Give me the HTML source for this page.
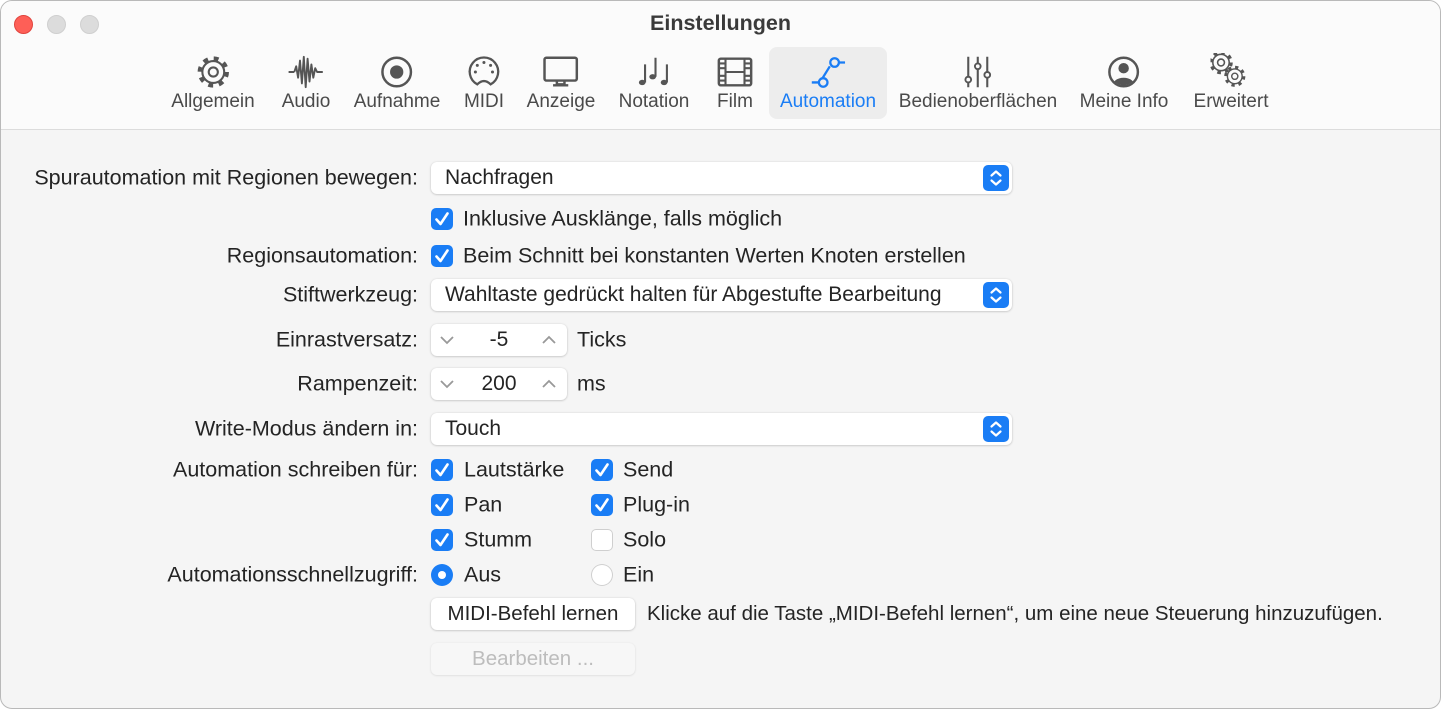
<!DOCTYPE html>
<html><head><meta charset="utf-8">
<style>
*{margin:0;padding:0;box-sizing:border-box}
body{width:1442px;height:710px;background:#fff;font-family:"Liberation Sans",sans-serif;color:#242424;position:relative;overflow:hidden}
.win{position:absolute;left:0;top:0;width:1441px;height:709px;border:1.5px solid #b9b9b9;border-radius:12px;background:#f5f5f5;overflow:hidden}
.tb{position:absolute;left:0;top:0;width:100%;height:129px;background:#fbfbfb;border-bottom:1px solid #dcdcdc}
.dot{position:absolute;top:14px;width:19px;height:19px;border-radius:50%}
.title{position:absolute;left:0;width:100%;top:10px;text-align:center;font-weight:bold;font-size:21.5px;color:#3a3a3a}
.it{position:absolute;top:52px;text-align:center;transform:translateX(-50%);font-size:19px;color:#4a4a4a;white-space:nowrap}
.it svg{display:block;margin:0 auto 0;width:40px;height:38px}
.it span{display:block}
.sel{position:absolute;left:768px;top:46px;width:118px;height:72px;background:#ededed;border-radius:8px}
.lbl{position:absolute;right:1022px;font-size:21.5px;white-space:nowrap;transform:translateY(-50%)}
.t{position:absolute;font-size:21.5px;white-space:nowrap;transform:translateY(-50%)}
.pop{position:absolute;left:430px;width:581px;height:32px;background:#fff;border-radius:6px;box-shadow:0 0.5px 2px rgba(0,0,0,.25);font-size:21px;padding-left:14px;line-height:32px}
.pop .b{position:absolute;right:3px;top:3px;width:26px;height:26px;border-radius:5px;background:#1a7df5}
.cb{position:absolute;width:22px;height:22px;border-radius:5px;background:#1a7df5;transform:translateY(-50%)}
.cb.off{background:#fff;box-shadow:inset 0 0 0 1px #cfcfcf}
.rb{position:absolute;width:22px;height:22px;border-radius:50%;background:#1a7df5;transform:translateY(-50%)}
.rb::after{content:"";position:absolute;left:7px;top:7px;width:8px;height:8px;border-radius:50%;background:#fff}
.rb.off{background:#fff;box-shadow:inset 0 0 0 1px #cfcfcf}
.rb.off::after{display:none}
.step{position:absolute;left:430px;width:136px;height:32px;background:#fff;border-radius:6px;box-shadow:0 0.5px 2px rgba(0,0,0,.25);font-size:21px;text-align:center;line-height:32px}
.btn{position:absolute;left:430px;width:204px;height:32px;background:#fff;border-radius:6px;box-shadow:0 0.5px 2px rgba(0,0,0,.25);font-size:20.5px;text-align:center;line-height:32px}
</style></head><body>
<svg width="0" height="0" style="position:absolute"><defs>
<symbol id="gear" viewBox="0 0 40 40"><circle cx="20" cy="20" r="14" fill="none" stroke="#555" stroke-width="5" stroke-dasharray="5 6"/><circle cx="20" cy="20" r="11.5" fill="#fbfbfb" stroke="#555" stroke-width="2.2"/><circle cx="20" cy="20" r="4.8" fill="none" stroke="#555" stroke-width="2.2"/></symbol>
</defs></svg>
<div class="win">
<div class="tb">
<div class="dot" style="left:13px;background:#fe5f57;border:1px solid #e0443e"></div>
<div class="dot" style="left:46px;background:#dcdcdc;border:1px solid #cfcfcf"></div>
<div class="dot" style="left:79px;background:#dcdcdc;border:1px solid #cfcfcf"></div>
<div class="title">Einstellungen</div>
<div class="sel"></div>
<div class="it" style="left:212px"><svg viewBox="0 0 40 40"><use href="#gear"/></svg><span>Allgemein</span></div>
<div class="it" style="left:305px"><svg viewBox="0 0 40 40"><path d="M2 20H8M8 20L10 14L12 26L14 8L16 32L18 4L20 36L22 6L24 30L26 12L28 26L30 16L32 20H38" fill="none" stroke="#555" stroke-width="2" stroke-linejoin="round"/></svg><span>Audio</span></div>
<div class="it" style="left:396px"><svg viewBox="0 0 40 40"><circle cx="20" cy="20" r="15" fill="none" stroke="#555" stroke-width="2.6"/><circle cx="20" cy="20" r="7" fill="#555"/></svg><span>Aufnahme</span></div>
<div class="it" style="left:483px"><svg viewBox="0 0 40 40"><path d="M13 33A15 15 0 1 1 27 33Q20 26 13 33Z" fill="none" stroke="#555" stroke-width="2.4"/><circle cx="20" cy="10" r="1.6" fill="#555"/><circle cx="13" cy="13" r="1.6" fill="#555"/><circle cx="27" cy="13" r="1.6" fill="#555"/><circle cx="11" cy="20" r="1.6" fill="#555"/><circle cx="29" cy="20" r="1.6" fill="#555"/></svg><span>MIDI</span></div>
<div class="it" style="left:560px"><svg viewBox="0 0 40 40"><rect x="3" y="5" width="34" height="24" rx="2" fill="none" stroke="#555" stroke-width="2.6"/><path d="M16 29V33H24V29M12 34H28" stroke="#555" stroke-width="2.6" fill="none"/></svg><span>Anzeige</span></div>
<div class="it" style="left:653px"><svg viewBox="0 0 40 40"><g fill="#555"><ellipse cx="8" cy="31" rx="3.5" ry="2.8"/><ellipse cx="19" cy="25" rx="3.5" ry="2.8"/><ellipse cx="31" cy="31" rx="3.5" ry="2.8"/></g><path d="M11 31V12M22 25V5M34 31V12" stroke="#555" stroke-width="2.2"/></svg><span>Notation</span></div>
<div class="it" style="left:734px"><svg viewBox="0 0 40 40"><rect x="3" y="6" width="34" height="28" rx="2" fill="none" stroke="#555" stroke-width="2.6"/><path d="M10 6V34M30 6V34M10 20H30M3 11H10M3 16H10M3 24H10M3 29H10M30 11H37M30 16H37M30 24H37M30 29H37" stroke="#555" stroke-width="2.2"/></svg><span>Film</span></div>
<div class="it" style="left:827px;color:#1a7df5"><svg viewBox="0 0 40 40"><path d="M3 31H11M32 10H38M14 27L22 14" stroke="#1a7df5" stroke-width="2.4" fill="none"/><circle cx="15" cy="31" r="4.5" fill="none" stroke="#1a7df5" stroke-width="2.4"/><circle cx="27" cy="10" r="4.5" fill="none" stroke="#1a7df5" stroke-width="2.4"/></svg><span>Automation</span></div>
<div class="it" style="left:977px"><svg viewBox="0 0 40 40"><path d="M10 4V36M20 4V36M30 4V36" stroke="#555" stroke-width="2.2"/><circle cx="10" cy="28" r="3" fill="#fbfbfb" stroke="#555" stroke-width="2"/><circle cx="20" cy="14" r="3" fill="#fbfbfb" stroke="#555" stroke-width="2"/><circle cx="30" cy="23" r="3" fill="#fbfbfb" stroke="#555" stroke-width="2"/></svg><span>Bedienoberflächen</span></div>
<div class="it" style="left:1123px"><svg viewBox="0 0 40 40"><defs><clipPath id="c"><circle cx="20" cy="20" r="14"/></clipPath></defs><circle cx="20" cy="20" r="15" fill="none" stroke="#555" stroke-width="2.6"/><g clip-path="url(#c)" fill="#555"><circle cx="20" cy="16" r="5.5"/><ellipse cx="20" cy="35" rx="12" ry="9"/></g></svg><span>Meine Info</span></div>
<div class="it" style="left:1230px"><svg viewBox="0 0 40 40"><use href="#gear" x="-5" y="-5" width="30" height="30"/><use href="#gear" x="11" y="11" width="27" height="27"/></svg><span>Erweitert</span></div>
</div>

<div class="lbl" style="top:177px">Spurautomation mit Regionen bewegen:</div>
<div class="pop" style="top:161px">Nachfragen<div class="b"><svg width="26" height="26" viewBox="0 0 26 26"><path d="M8.5 10.5L13 6.5L17.5 10.5M8.5 15.5L13 19.5L17.5 15.5" fill="none" stroke="#fff" stroke-width="2.2" stroke-linecap="round" stroke-linejoin="round"/></svg></div></div>

<div class="cb" style="left:430px;top:218px"><svg width="22" height="22"><path d="M5.5 11.5L9.5 16L16.5 5.5" fill="none" stroke="#fff" stroke-width="2.6" stroke-linecap="round" stroke-linejoin="round"/></svg></div>
<div class="t" style="left:462px;top:218px">Inklusive Ausklänge, falls möglich</div>

<div class="lbl" style="top:255px">Regionsautomation:</div>
<div class="cb" style="left:430px;top:255px"><svg width="22" height="22"><path d="M5.5 11.5L9.5 16L16.5 5.5" fill="none" stroke="#fff" stroke-width="2.6" stroke-linecap="round" stroke-linejoin="round"/></svg></div>
<div class="t" style="left:462px;top:255px">Beim Schnitt bei konstanten Werten Knoten erstellen</div>

<div class="lbl" style="top:294px">Stiftwerkzeug:</div>
<div class="pop" style="top:278px">Wahltaste gedrückt halten für Abgestufte Bearbeitung<div class="b"><svg width="26" height="26" viewBox="0 0 26 26"><path d="M8.5 10.5L13 6.5L17.5 10.5M8.5 15.5L13 19.5L17.5 15.5" fill="none" stroke="#fff" stroke-width="2.2" stroke-linecap="round" stroke-linejoin="round"/></svg></div></div>

<div class="lbl" style="top:339px">Einrastversatz:</div>
<div class="step" style="top:323px">-5<svg style="position:absolute;left:8px;top:9px" width="16" height="14"><path d="M2 4L8 10L14 4" fill="none" stroke="#999" stroke-width="1.8"/></svg><svg style="position:absolute;right:10px;top:9px" width="16" height="14"><path d="M2 10L8 4L14 10" fill="none" stroke="#999" stroke-width="1.8"/></svg></div>
<div class="t" style="left:576px;top:339px">Ticks</div>

<div class="lbl" style="top:383px">Rampenzeit:</div>
<div class="step" style="top:367px">200<svg style="position:absolute;left:8px;top:9px" width="16" height="14"><path d="M2 4L8 10L14 4" fill="none" stroke="#999" stroke-width="1.8"/></svg><svg style="position:absolute;right:10px;top:9px" width="16" height="14"><path d="M2 10L8 4L14 10" fill="none" stroke="#999" stroke-width="1.8"/></svg></div>
<div class="t" style="left:576px;top:383px">ms</div>

<div class="lbl" style="top:428px">Write-Modus ändern in:</div>
<div class="pop" style="top:412px">Touch<div class="b"><svg width="26" height="26" viewBox="0 0 26 26"><path d="M8.5 10.5L13 6.5L17.5 10.5M8.5 15.5L13 19.5L17.5 15.5" fill="none" stroke="#fff" stroke-width="2.2" stroke-linecap="round" stroke-linejoin="round"/></svg></div></div>

<div class="lbl" style="top:469px">Automation schreiben für:</div>
<div class="cb" style="left:430px;top:469px"><svg width="22" height="22"><path d="M5.5 11.5L9.5 16L16.5 5.5" fill="none" stroke="#fff" stroke-width="2.6" stroke-linecap="round" stroke-linejoin="round"/></svg></div>
<div class="t" style="left:463px;top:469px">Lautstärke</div>
<div class="cb" style="left:590px;top:469px"><svg width="22" height="22"><path d="M5.5 11.5L9.5 16L16.5 5.5" fill="none" stroke="#fff" stroke-width="2.6" stroke-linecap="round" stroke-linejoin="round"/></svg></div>
<div class="t" style="left:622px;top:469px">Send</div>

<div class="cb" style="left:430px;top:504px"><svg width="22" height="22"><path d="M5.5 11.5L9.5 16L16.5 5.5" fill="none" stroke="#fff" stroke-width="2.6" stroke-linecap="round" stroke-linejoin="round"/></svg></div>
<div class="t" style="left:463px;top:504px">Pan</div>
<div class="cb" style="left:590px;top:504px"><svg width="22" height="22"><path d="M5.5 11.5L9.5 16L16.5 5.5" fill="none" stroke="#fff" stroke-width="2.6" stroke-linecap="round" stroke-linejoin="round"/></svg></div>
<div class="t" style="left:622px;top:504px">Plug-in</div>

<div class="cb" style="left:430px;top:539px"><svg width="22" height="22"><path d="M5.5 11.5L9.5 16L16.5 5.5" fill="none" stroke="#fff" stroke-width="2.6" stroke-linecap="round" stroke-linejoin="round"/></svg></div>
<div class="t" style="left:463px;top:539px">Stumm</div>
<div class="cb off" style="left:590px;top:539px"></div>
<div class="t" style="left:622px;top:539px">Solo</div>

<div class="lbl" style="top:574px">Automationsschnellzugriff:</div>
<div class="rb" style="left:430px;top:574px"></div>
<div class="t" style="left:463px;top:574px">Aus</div>
<div class="rb off" style="left:590px;top:574px"></div>
<div class="t" style="left:622px;top:574px">Ein</div>

<div class="btn" style="top:597px">MIDI-Befehl lernen</div>
<div class="t" style="left:646px;top:613px;font-size:20.5px">Klicke auf die Taste „MIDI-Befehl lernen“, um eine neue Steuerung hinzuzufügen.</div>
<div class="btn" style="top:642px;background:#f7f7f7;color:#bdbdbd;box-shadow:0 0.5px 2px rgba(0,0,0,.12)">Bearbeiten ...</div>
</div>
</body></html>
